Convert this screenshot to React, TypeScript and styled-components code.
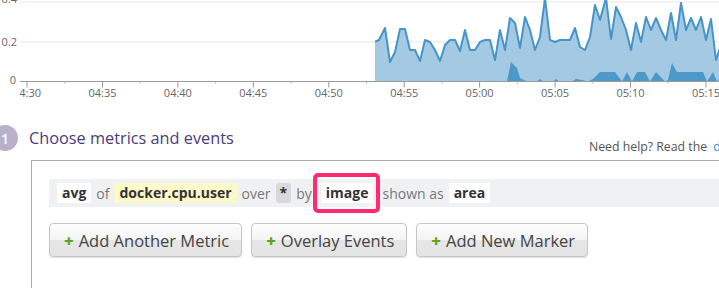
import React from 'react';
import styled, { createGlobalStyle } from 'styled-components';

const GlobalStyle = createGlobalStyle`
  html, body {
    margin: 0;
    padding: 0;
    background: #fff;
    overflow: hidden;
  }
  body {
    width: 719px;
    height: 288px;
    font-family: "Open Sans", "Liberation Sans", sans-serif;
  }
`;

// Graphique en haut (aire + axe)
const ChartSvg = styled.svg`
  display: block;
  width: 719px;
  height: 104px;
  font-family: "Open Sans", "Liberation Sans", sans-serif;
`;

const TICK0 = 27;
const STEP = 75.44;
const BASE = 81.5;

const labels = ['04:30', '04:35', '04:40', '04:45', '04:50', '04:55', '05:00', '05:05', '05:10', '05:15'];

const line: [number, number][] = [
  [375, 41.7], [379, 40], [385, 28], [390, 62], [395, 52], [400, 29], [405, 29], [410, 50],
  [415, 50], [420, 61], [425, 40], [430, 42], [435, 50], [440, 61], [445, 45], [450, 40],
  [455, 40], [460, 51], [465, 30], [470, 50], [475, 50], [480, 42], [485, 40], [490, 40],
  [495, 60], [500, 30], [505, 50], [510, 18], [515, 23], [520, 48], [525, 17], [530, 30],
  [535, 50], [540, 37], [545, -2], [550, 40], [555, 42], [560, 40], [565, 40], [570, 40],
  [575, 28], [580, 47], [585, 50], [590, 37], [595, 5], [600, 20], [606, -2], [611, 39],
  [616, 7], [621, 17], [626, 30], [631, 50], [636, 23], [641, 42], [646, 17], [651, 30],
  [656, 18], [661, 30], [666, 40], [671, 13], [676, 40], [681, 3], [686, 30], [691, 18],
  [696, 30], [701, 17], [706, 40], [711, 19], [716, 60], [720, 48],
];

const dark: [number, number][] = [
  [507, BASE], [511, 62], [517, 68], [520, 78], [527, BASE], [537, BASE], [540, 79], [543, BASE],
  [553, BASE], [556, 79], [559, BASE], [572, BASE], [576, 79], [582, 80], [588, BASE], [593, 79],
  [600, 72], [615, 72], [622, BASE], [627, 72], [632, BASE], [637, 72], [645, 72], [650, BASE],
  [656, 72], [665, BASE], [668, 80], [672, 63], [677, 72], [703, 72], [707, BASE], [713, 72],
  [717, BASE], [720, 79], [720, BASE],
];

const pts = (p: [number, number][]) => p.map(([x, y]) => `${x},${y}`).join(' ');

function Chart() {
  const areaPts = `375,${BASE} ${pts(line)} 720,${BASE}`;
  return (
    <ChartSvg viewBox="0 0 719 104">
      <defs>
        <clipPath id="plot">
          <rect x="20" y="0" width="700" height="104" />
        </clipPath>
      </defs>
      <line x1="20" y1="2" x2="719" y2="2" stroke="#efefef" strokeWidth="1.5" />
      <line x1="20" y1="42" x2="719" y2="42" stroke="#efefef" strokeWidth="1.5" />
      <g fontSize="11" fill="#666" textAnchor="end">
        <text x="17" y="3">0.4</text>
        <text x="17" y="46">0.2</text>
        <text x="16" y="84">0</text>
      </g>
      <polygon points={areaPts} fill="#a3c9e3" />
      <polygon points={pts(dark)} fill="#4b98c9" />
      <polyline points={pts(line)} fill="none" stroke="#4795c8" strokeWidth="2" strokeLinejoin="round" />
      <line x1="20" y1={BASE} x2="719" y2={BASE} stroke="#9a9a9a" strokeWidth="1" />
      {labels.map((l, i) => {
        const x = TICK0 + STEP * i;
        return (
          <g key={l}>
            <line x1={x} y1={BASE} x2={x} y2={BASE + 6} stroke="#9a9a9a" />
            <line x1={x + STEP / 2} y1={BASE} x2={x + STEP / 2} y2={BASE + 2} stroke="#b0b0b0" />
            <text x={x} y="97" fontSize="11" fill="#666" textAnchor="middle" clipPath="url(#plot)">
              {l}
            </text>
          </g>
        );
      })}
    </ChartSvg>
  );
}

// Étape 1 : titre + aide
const StepHeader = styled.div`
  display: flex;
  align-items: center;
  height: 26px;
  margin: 21px 0 0 -8px;
`;

const StepBadge = styled.div`
  width: 26px;
  height: 26px;
  border-radius: 50%;
  background: #b9b1c9;
  color: #fff;
  font-size: 14px;
  font-weight: 600;
  display: flex;
  align-items: center;
  justify-content: center;
  margin-right: 11px;
  flex-shrink: 0;
`;

const StepTitle = styled.h2`
  margin: 0;
  font-size: 16.3px;
  line-height: 26px;
  font-weight: 400;
  color: #4a3c7c;
  white-space: nowrap;
`;

const Help = styled.div`
  margin-left: auto;
  margin-right: -82px;
  margin-bottom: -4px;
  align-self: flex-end;
  font-size: 12.3px;
  line-height: 16px;
  color: #555;
  white-space: nowrap;

  a {
    margin-left: 6px;
    color: #2f8fd8;
    text-decoration: none;
  }
`;

// Panneau de la requête
const Panel = styled.section`
  margin: 9px -60px 0 31px;
  border: 1px solid #ababab;
  padding: 18px 0 40px 17px;
`;

const QueryRow = styled.div`
  display: flex;
  align-items: center;
  gap: 5px;
  height: 28px;
  padding: 0 8px;
  background: #f0f1f3;
  font-size: 14px;
  white-space: nowrap;
`;

const Token = styled.span<{ $tone?: 'plain' | 'metric' | 'star'; $marked?: boolean }>`
  position: relative;
  display: inline-block;
  height: 20px;
  line-height: 20px;
  padding: ${({ $tone }) => ($tone === 'star' ? '0 4px' : '0 5px')};
  font-weight: 700;
  color: #333;
  border-radius: ${({ $tone }) => ($tone === 'star' ? '3px' : '1px')};
  background: ${({ $tone }) =>
    $tone === 'metric' ? '#fdf9cb' : $tone === 'star' ? '#dadada' : '#fff'};
  margin: ${({ $marked }) => ($marked ? '0 4px 0 4px' : '0')};

  &::after {
    content: '';
    display: ${({ $marked }) => ($marked ? 'block' : 'none')};
    position: absolute;
    top: -10px;
    bottom: -10px;
    left: -8px;
    right: -7px;
    border: 4px solid #ff2b6e;
    border-radius: 5px;
  }
`;

const Word = styled.span`
  color: #777;
`;

const Actions = styled.div`
  display: flex;
  gap: 9px;
  margin-top: 16px;
`;

const Button = styled.button`
  display: inline-flex;
  align-items: center;
  height: 34px;
  padding: 0 12px 0 14px;
  border: 1px solid #c6c6c6;
  border-radius: 4px;
  background: linear-gradient(#fdfdfd 0%, #f4f4f4 50%, #e6e6e6 51%, #e4e4e4 100%);
  box-shadow: 0 1px 1px rgba(0, 0, 0, 0.12);
  font-family: "Open Sans", "Liberation Sans", sans-serif;
  font-size: 16.5px;
  color: #444;
  cursor: pointer;
  white-space: nowrap;
`;

const Plus = styled.span`
  color: #5ea51a;
  font-weight: 800;
  margin-right: 5px;
`;

export default function App() {
  return (
    <>
      <GlobalStyle />
      <Chart />
      <StepHeader>
        <StepBadge>1</StepBadge>
        <StepTitle>Choose metrics and events</StepTitle>
        <Help>
          Need help? Read the<a href="#">documentation</a>
        </Help>
      </StepHeader>
      <Panel>
        <QueryRow>
          <Token>avg</Token>
          <Word>of</Word>
          <Token $tone="metric">docker.cpu.user</Token>
          <Word>over</Word>
          <Token $tone="star">*</Token>
          <Word>by</Word>
          <Token $marked>image</Token>
          <Word>shown as</Word>
          <Token>area</Token>
        </QueryRow>
        <Actions>
          <Button><Plus>+</Plus>Add Another Metric</Button>
          <Button><Plus>+</Plus>Overlay Events</Button>
          <Button><Plus>+</Plus>Add New Marker</Button>
        </Actions>
      </Panel>
    </>
  );
}
